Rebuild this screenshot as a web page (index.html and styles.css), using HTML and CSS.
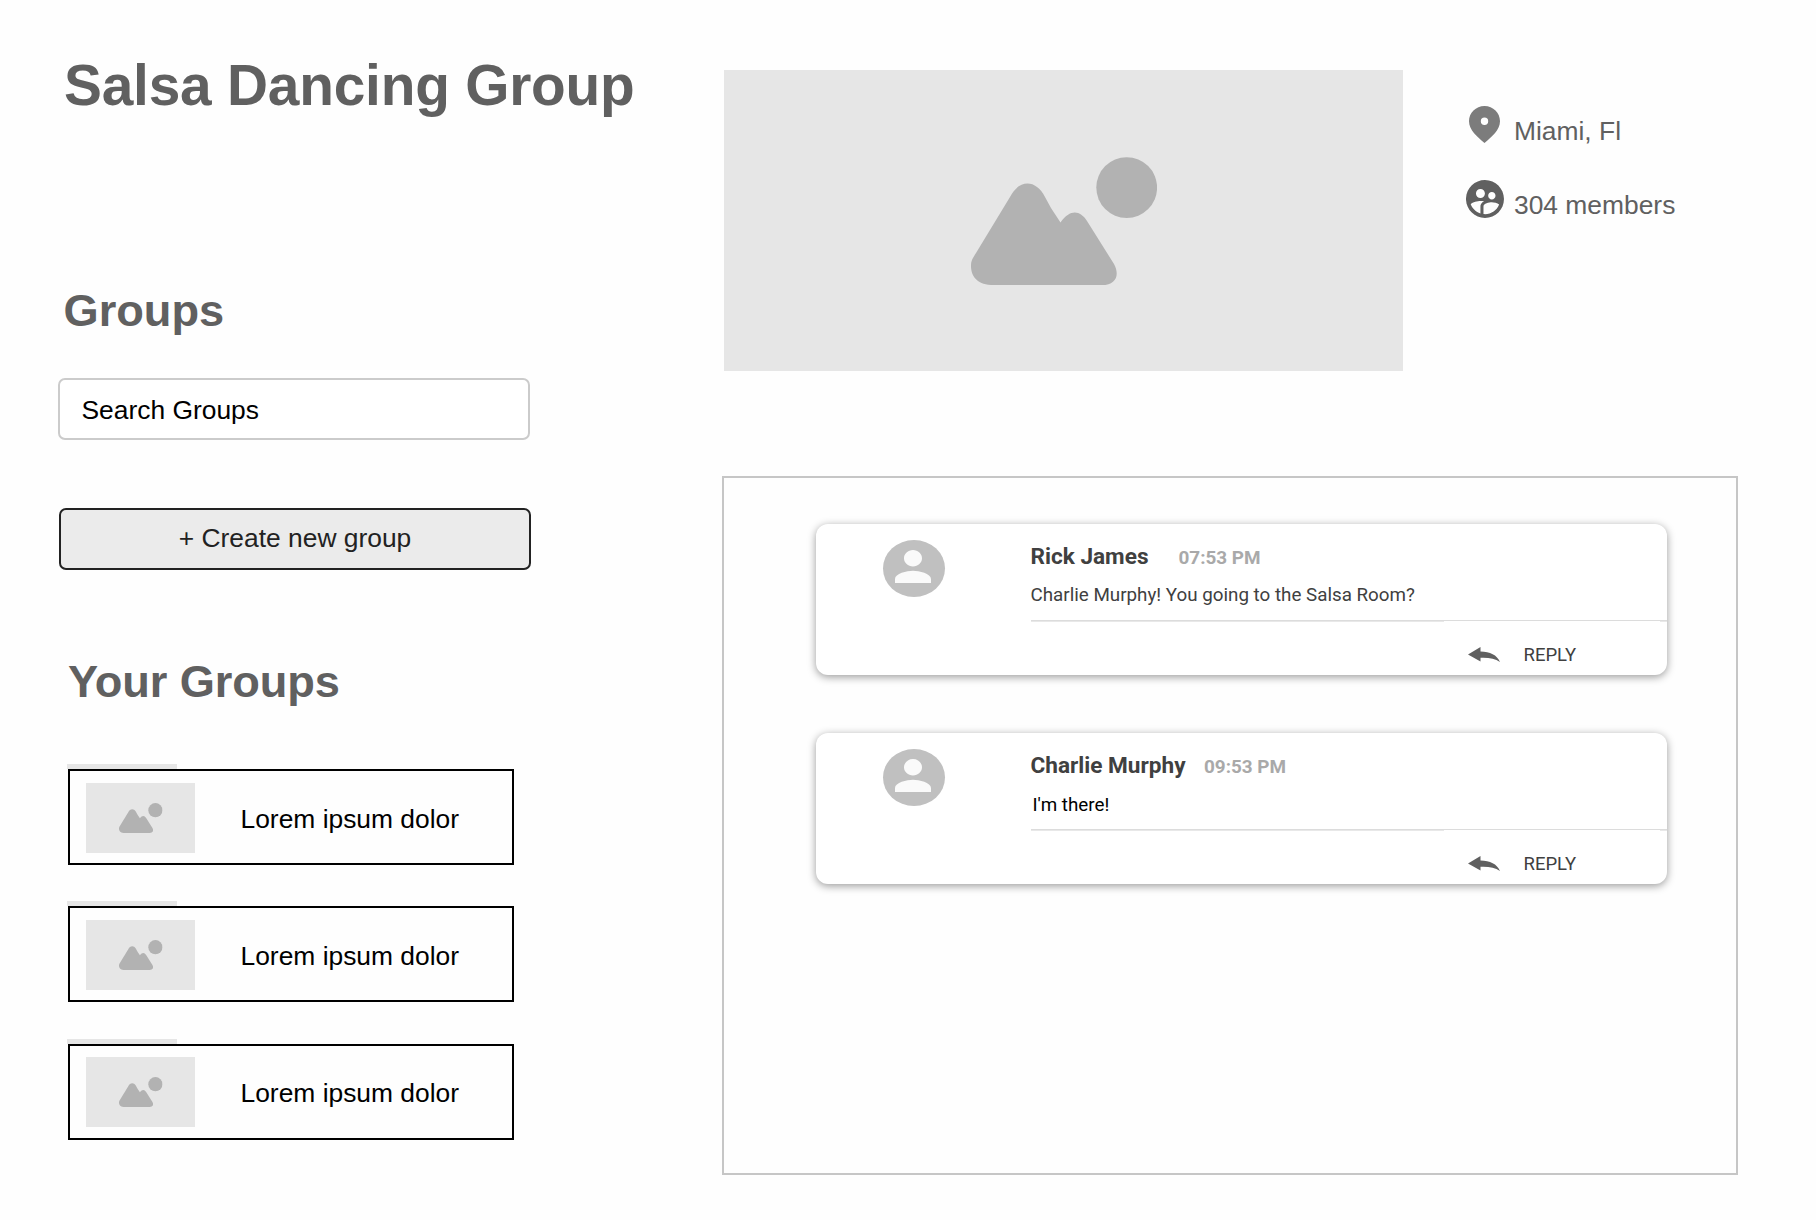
FILE: index.html
```html
<!DOCTYPE html>
<html lang="en">
<head>
<meta charset="utf-8">
<title>Salsa Dancing Group</title>
<link rel="stylesheet" href="styles.css">
</head>
<body>
<svg class="defs" width="0" height="0" aria-hidden="true">
  <symbol id="picture" viewBox="0 0 186 128" preserveAspectRatio="none">
    <path d="M0 109 C0 103 2 101 5 96 L39 40 C48 22 65 22 74 40 L80 51 L89.500 65.500 C99 52 109 53 116 64 L143 107 C149 118 145 128 131 128 L20 128 C5 127 0 118 0 109 Z"/>
    <circle cx="155.700" cy="30.600" r="30.400"/>
  </symbol>
  <symbol id="person" viewBox="4 4 16 16" preserveAspectRatio="none">
    <path d="M12 12c2.210 0 4-1.790 4-4s-1.790-4-4-4-4 1.790-4 4 1.790 4 4 4zm0 2c-2.670 0-8 1.340-8 4v2h16v-2c0-2.660-5.330-4-8-4z"/>
  </symbol>
  <symbol id="reply" viewBox="0 0 32 15" preserveAspectRatio="none">
    <path d="M0 7.500 L12.500 0 V4.500 C22 4.500 29 8 32 15 C27 11.500 21 10.500 12.500 10.800 V14.500 Z"/>
  </symbol>
</svg>
<main class="page">
  <aside class="side">
    <h1 class="title">Salsa Dancing Group</h1>
    <h2 class="heading">Groups</h2>
    <div class="search">Search Groups</div>
    <button class="create" type="button">+ Create new group</button>
    <h2 class="heading heading-own">Your Groups</h2>
    <ul class="groups">
      <li class="group"><span class="thumb"><svg><use href="#picture"/></svg></span><span class="group-name">Lorem ipsum dolor</span></li>
      <li class="group"><span class="thumb"><svg><use href="#picture"/></svg></span><span class="group-name">Lorem ipsum dolor</span></li>
      <li class="group"><span class="thumb"><svg><use href="#picture"/></svg></span><span class="group-name">Lorem ipsum dolor</span></li>
    </ul>
  </aside>
  <section class="content">
    <header class="top">
      <div class="hero"><svg><use href="#picture"/></svg></div>
      <div class="meta">
        <div class="meta-row">
          <svg class="pin" viewBox="4 1.900 16 19.200" preserveAspectRatio="none"><path fill-rule="evenodd" d="M12 1.900C7.500 1.900 4 5.500 4 9.800c0 4.600 4.400 8.100 8 11.300 3.600-3.200 8-6.700 8-11.300 0-4.300-3.500-7.900-8-7.900zm0 6a1.900 1.900 0 1 1 0 3.800 1.900 1.900 0 0 1 0-3.800z"/></svg>
          <span>Miami, Fl</span>
        </div>
        <div class="meta-row">
          <svg class="people" viewBox="2 2 20 20"><path d="M11.990 2c-5.520 0-10 4.480-10 10s4.480 10 10 10 10-4.480 10-10-4.480-10-10-10zm3.610 6.340c1.070 0 1.930.86 1.930 1.930s-.86 1.930-1.930 1.930-1.930-.86-1.930-1.930c-.01-1.070.86-1.930 1.930-1.930zm-6-1.580c1.300 0 2.360 1.060 2.360 2.360s-1.060 2.360-2.360 2.360-2.360-1.060-2.360-2.360c0-1.310 1.050-2.360 2.360-2.360zm0 9.130v3.750c-2.400-.75-4.300-2.600-5.140-4.960 1.050-1.120 3.670-1.690 5.140-1.690.53 0 1.200.08 1.900.22-1.640.87-1.900 2.020-1.900 2.680zM11.990 20c-.27 0-.53-.01-.79-.04v-4.070c0-1.420 2.940-2.130 4.400-2.130 1.070 0 2.920.39 3.840 1.150-1.170 2.970-4.060 5.090-7.450 5.090z"/></svg>
          <span>304 members</span>
        </div>
      </div>
    </header>
    <div class="feed">
      <article class="message">
        <span class="avatar"><svg><use href="#person"/></svg></span>
        <div class="message-main">
          <div class="message-head"><strong class="author author-rick">Rick James</strong><time class="time">07:53 PM</time></div>
          <p class="text">Charlie Murphy! You going to the Salsa Room?</p>
          <div class="rule"></div>
          <div class="reply"><svg><use href="#reply"/></svg><span>REPLY</span></div>
        </div>
      </article>
      <article class="message">
        <span class="avatar"><svg><use href="#person"/></svg></span>
        <div class="message-main">
          <div class="message-head"><strong class="author author-charlie">Charlie Murphy</strong><time class="time">09:53 PM</time></div>
          <p class="text text-dark">I'm there!</p>
          <div class="rule"></div>
          <div class="reply"><svg><use href="#reply"/></svg><span>REPLY</span></div>
        </div>
      </article>
    </div>
  </section>
</main>
</body>
</html>
```

FILE: styles.css
```css
* { box-sizing: border-box; }
body {
  margin: 0;
  background: #fefefe;
  color: #000;
  font-family: "Liberation Sans", Arial, sans-serif;
  font-size: 26.400px;
}
svg { display: block; }
.defs { position: absolute; }
h1, h2, p, ul { margin: 0; padding: 0; }
.page {
  display: flex;
  width: 1816px;
  height: 1220px;
  overflow: hidden;
}

/* Left column */
.side { width: 722px; padding: 53px 0 0 58px; }
.title {
  margin-left: 6px;
  color: #606060;
  font-size: 56.800px;
  letter-spacing: -.2px;
  line-height: 66px;
  white-space: nowrap;
}
.heading {
  margin: 165px 0 0 5.500px;
  color: #606060;
  font-size: 45.200px;
  line-height: 54px;
}
.search {
  width: 472px;
  height: 62px;
  margin-top: 40px;
  padding-left: 21.500px;
  border: 2px solid #cbcbcb;
  border-radius: 7px;
  background: #fff;
  line-height: 61px;
}
.create {
  display: block;
  width: 472px;
  height: 62px;
  margin: 68px 0 0 1px;
  padding: 0 0 2px;
  border: 2px solid #222;
  border-radius: 7px;
  background: #ebebeb;
  color: #222;
  font: inherit;
  line-height: 56px;
}
.heading-own { margin: 85px 0 0 10px; letter-spacing: -.1px; }
.groups {
  display: flex;
  flex-direction: column;
  gap: 41.300px;
  margin: 60px 0 0 10px;
  list-style: none;
}
.group {
  position: relative;
  display: flex;
  align-items: center;
  width: 446px;
  height: 96px;
  padding-left: 16px;
  border: 2px solid #000;
  background: #fefefe;
}
/* strip of the stacked picture that shows above the card */
.group::before {
  content: "";
  position: absolute;
  left: -3px;
  top: -7px;
  width: 110px;
  height: 5px;
  background: #e6e6e6;
}
.thumb {
  width: 109px;
  height: 70px;
  margin-top: 1px;
  padding: 20px 0 0 33px;
  background: #e6e6e6;
}
.thumb svg { width: 43.500px; height: 30px; fill: #b2b2b2; }
.group-name { margin: 4px 0 0 45.500px; }

/* Right column */
.content { flex: 1; padding-top: 70px; }
.top { display: flex; height: 302px; }
.hero {
  width: 679px;
  height: 301px;
  margin: 0 .500px 0 2px;
  padding: 87px 0 0 247px;
  background: #e6e6e6;
}
.hero svg { width: 186px; height: 128px; fill: #b2b2b2; }
.meta {
  display: flex;
  flex-direction: column;
  gap: 37px;
  padding: 36px 0 0 61px;
  color: #606060;
}
.meta-row { display: flex; height: 37px; }
.meta-row span { margin-top: 10px; line-height: 30px; }
.pin { width: 31px; height: 37px; margin: 0 14.500px 0 4px; fill: #7c7c7c; }
.people { width: 38px; height: 38px; margin: -.500px 10.500px 0 1px; fill: #606060; }

.feed {
  display: flex;
  flex-direction: column;
  gap: 58px;
  width: 1016px;
  height: 699px;
  margin-top: 104px;
  padding: 46px 0 0 92px;
  border: 2px solid #c6c6c6;
  font-family: Roboto, sans-serif;
}
.message {
  display: flex;
  width: 851px;
  height: 151px;
  border-radius: 12px;
  background: #fff;
  box-shadow: 0 2px 8px rgba(0, 0, 0, .4);
}
.avatar {
  width: 62px;
  height: 57px;
  margin: 15.500px 0 0 67px;
  padding: 10px 0 0 12px;
  border-radius: 50%;
  background: #c0c0c0;
}
.avatar svg { width: 36px; height: 33px; fill: #fafafa; }
.message-main { flex: 1; margin-left: 85.500px; }
.message-head {
  display: flex;
  align-items: baseline;
  height: 55px;
  padding-top: 19.500px;
}
.author { color: #404040; font-size: 22.600px; line-height: 26px; }
.author-rick { width: 148px; }
.author-charlie { width: 173.500px; }
.time { color: #a9a9a9; font-size: 18.900px; font-weight: 700; }
.text { height: 41px; color: #404040; font-size: 18.800px; line-height: 32px; }
.text-dark { padding: 1px 0 0 2px; color: #000; }
.rule {
  height: 2px;
  background:
    linear-gradient(#dcdcdc, #dcdcdc) 0 0 / 100% 1px no-repeat,
    linear-gradient(#e8e8e8, #e8e8e8) 0 1px / 413px 1px no-repeat,
    linear-gradient(#e8e8e8, #e8e8e8) 100% 1px / 7px 1px no-repeat;
}
.reply {
  display: flex;
  align-items: flex-start;
  margin: 25px 0 0 437.500px;
  color: #404040;
  font-size: 18.500px;
  line-height: 22px;
}
.reply svg { width: 32px; height: 15px; margin-right: 23.500px; fill: #606060; }
.reply span { margin-top: -3px; }
```
